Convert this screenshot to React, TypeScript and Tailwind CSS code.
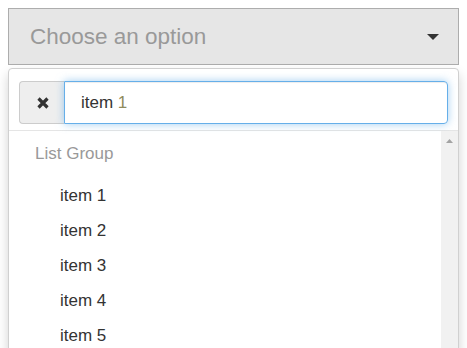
export default function App() {
  const items = ["item 1", "item 2", "item 3", "item 4", "item 5"];

  return (
    <div className="p-2 font-['Liberation_Sans',Arial,sans-serif] text-[#333]">
      <div className="flex h-[57px] items-center justify-between border border-[#adadad] bg-[#e6e6e6] pl-[21px] pr-[19px]">
        <span className="text-[22.5px] text-[#999]">Choose an option</span>
        <svg width="12" height="6" viewBox="0 0 12 6" className="mt-[1px]">
          <path d="M0 0 L12 0 L6 6 Z" fill="#333" />
        </svg>
      </div>

      <div className="mt-[3px] rounded-t border border-[#d0d0d0] bg-white shadow-[0_6px_12px_rgba(0,0,0,0.175)]">
        <div className="flex px-[10px] pb-[6px] pt-[12px]">
          <div className="flex h-[43px] w-[45px] items-center justify-center rounded-l border border-r-0 border-[#ccc] bg-[#eee] pl-[2px]">
            <svg width="12" height="12" viewBox="0 0 12 12">
              <path d="M1.5 1.5 L10.5 10.5 M10.5 1.5 L1.5 10.5" stroke="#333" strokeWidth="3.2" />
            </svg>
          </div>
          <div className="flex h-[43px] flex-1 items-center rounded-r border border-[#66afe9] pl-4 text-[17px] shadow-[inset_0_1px_1px_rgba(0,0,0,0.075),0_0_8px_rgba(102,175,233,0.6)]">
            <span>item&nbsp;</span>
            <span className="text-[#8f8b5c]">1</span>
          </div>
        </div>

        <div className="flex border-t border-[#e5e5e5]">
          <ul className="flex-1 text-[17px]">
            <li className="pb-[12px] pl-[26px] pt-[11px] leading-[24px] text-[#999]">List Group</li>
            {items.map((item) => (
              <li key={item} className="flex h-[35px] items-center pl-[51px]">
                {item}
              </li>
            ))}
          </ul>
          <div className="flex w-[17px] justify-center bg-[#f1f1f1] pt-[8px]">
            <svg width="7" height="4" viewBox="0 0 7 4">
              <path d="M0 4 L3.5 0 L7 4 Z" fill="#a3a3a3" />
            </svg>
          </div>
        </div>
      </div>
    </div>
  );
}
